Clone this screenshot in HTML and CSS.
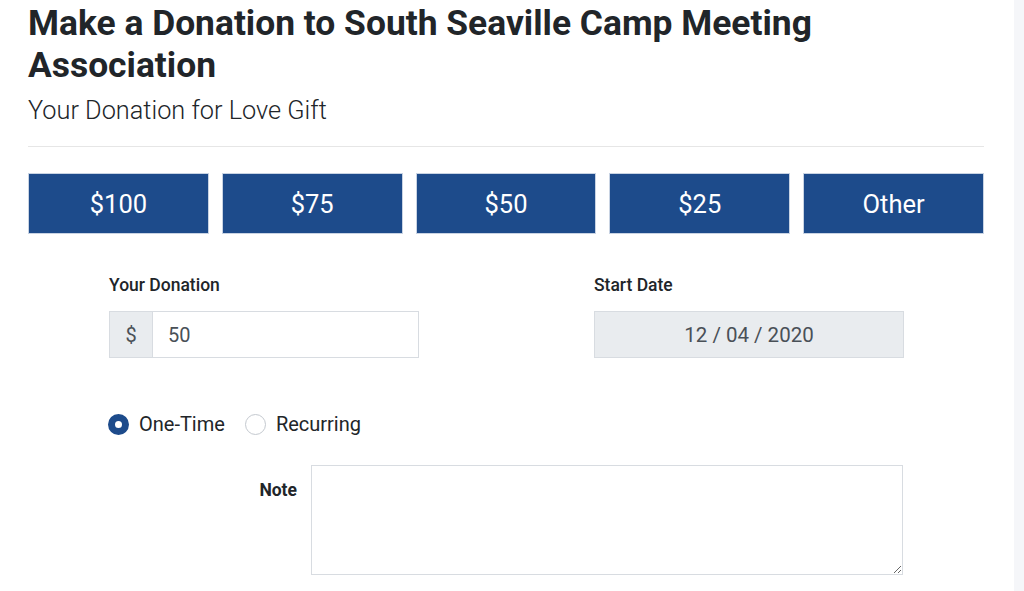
FILE: index.html
```html
<!DOCTYPE html>
<html>
<head>
<meta charset="utf-8">
<link rel="stylesheet" href="styles.css">
</head>
<body>
<div class="page">
  <main class="content">
    <h1 class="title">Make a Donation to South Seaville Camp Meeting Association</h1>
    <p class="subtitle">Your Donation for Love Gift</p>
    <hr class="rule">
    <div class="amounts">
      <button class="amount">$100</button>
      <button class="amount">$75</button>
      <button class="amount">$50</button>
      <button class="amount">$25</button>
      <button class="amount">Other</button>
    </div>
    <div class="fields">
      <div class="field">
        <label class="label">Your Donation</label>
        <div class="input-group">
          <span class="addon">$</span>
          <input class="input" type="text" value="50">
        </div>
      </div>
      <div class="field">
        <label class="label">Start Date</label>
        <div class="date">12 / 04 / 2020</div>
      </div>
    </div>
    <div class="radios">
      <label class="radio"><span class="dot checked"></span>One-Time</label>
      <label class="radio"><span class="dot"></span>Recurring</label>
    </div>
    <div class="note-row">
      <label class="note-label">Note</label>
      <textarea class="note"></textarea>
    </div>
  </main>
  <aside class="strip"></aside>
</div>
</body>
</html>
```

FILE: styles.css
```css
* { box-sizing: border-box; }
html, body { margin: 0; padding: 0; background: #fff; }
body { font-family: Roboto, "Noto Sans", sans-serif; color: #212529; overflow: hidden; }
.page { display: flex; height: 591px; }
.content { width: 1014px; padding: 0 30px 0 28px; }
.strip { flex: 1; background: #f5f6f9; }
.title {
  margin: 0;
  padding-top: 2px;
  font-size: 35.4px;
  line-height: 42px;
  font-weight: 700;
  color: #212529;
  width: 830px;
}
.subtitle {
  margin: 10px 0 0;
  font-size: 25.3px;
  line-height: 30px;
  font-weight: 300;
  color: #212529;
}
.rule { margin: 20px 0 0; border: 0; border-top: 1px solid #e6e6e6; height: 0; }
.amounts {
  margin-top: 26px;
  display: grid;
  grid-template-columns: repeat(5, 1fr);
  gap: 13px;
}
.amount {
  height: 61px;
  background: #1d4b8b;
  border: 1px solid #c8d3e3;
  color: #fff;
  font-family: Roboto, sans-serif;
  font-size: 25.5px;
  font-weight: 400;
  padding: 0;
}
.fields {
  margin-top: 41px;
  padding-left: 81px;
  display: grid;
  grid-template-columns: 310px 310px;
  column-gap: 175px;
}
.label {
  display: block;
  font-size: 17.5px;
  font-weight: 500;
  line-height: 20px;
  color: #212529;
  margin-bottom: 16px;
}
.input-group { display: flex; height: 47px; border: 1px solid #d8dce1; }
.addon {
  width: 43px;
  background: #e9ecef;
  border-right: 1px solid #d8dce1;
  display: flex;
  align-items: center;
  justify-content: center;
  font-size: 20px;
  color: #495057;
}
.input {
  flex: 1;
  border: 0;
  padding: 0 0 0 15px;
  font-family: Roboto, sans-serif;
  font-size: 20px;
  color: #495057;
  outline: none;
  min-width: 0;
}
.date {
  height: 47px;
  background: #e9ecef;
  border: 1px solid #d8dce1;
  display: flex;
  align-items: center;
  justify-content: center;
  font-size: 20.5px;
  color: #495057;
}
.radios {
  margin-top: 54px;
  padding-left: 80px;
  display: flex;
  gap: 20px;
}
.radio {
  display: flex;
  align-items: center;
  gap: 10px;
  font-size: 20px;
  color: #212529;
  line-height: 24px;
}
.dot {
  width: 21px;
  height: 21px;
  border-radius: 50%;
  border: 1px solid #c4c9cf;
  background: #fff;
}
.dot.checked { border: 7px solid #1d4b8b; }
.note-row {
  margin-top: 29px;
  display: flex;
  align-items: flex-start;
}
.note-label {
  width: 269px;
  text-align: right;
  font-size: 17.5px;
  font-weight: 700;
  line-height: 20px;
  padding-top: 15px;
}
.note {
  margin-left: 14px;
  width: 592px;
  height: 110px;
  border: 1px solid #d8dce1;
  resize: both;
  font-family: Roboto, sans-serif;
}
```
